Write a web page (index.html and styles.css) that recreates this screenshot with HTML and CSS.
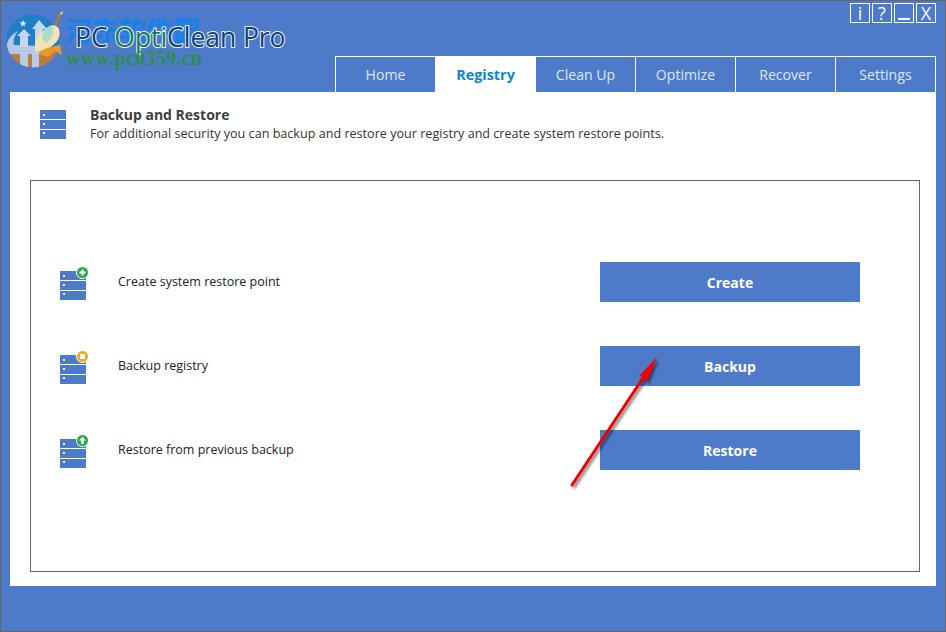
FILE: index.html
```html
<!DOCTYPE html>
<html>
    <head>
        <meta charset="utf-8">
        <title>PC OptiClean Pro</title>
        <link rel="stylesheet" href="styles.css">
    </head>
    <body>
        <div class="window">

            <!--Header with logo, window buttons and tabs-->
            <div class="header">
                <svg class="logo_icon" width="70" height="70" viewBox="0 0 70 70">
                    <defs>
                        <clipPath id="logo_circle"><circle cx="33" cy="36" r="26.5"/></clipPath>
                    </defs>
                    <g clip-path="url(#logo_circle)">
                        <rect x="0" y="0" width="70" height="70" fill="#1f80c8"/>
                        <rect x="0" y="44" width="70" height="26" fill="#b97c42"/>
                        <path d="M6 46 Q6 32 18 26 Q12 34 14 40 L42 41 L44 49 L6 49 Z" fill="#b4c8e6"/>
                        <rect x="20" y="47" width="8" height="16" fill="#b8cbe8"/>
                        <rect x="32" y="47" width="7" height="16" fill="#b8cbe8"/>
                        <path d="M24 24 L31 31 L28 31 L28 42 L20 42 L20 31 L17 31 Z" fill="#c6d6ee"/>
                        <path d="M39 15 L47 24 L43 24 L43 42 L35 42 L35 24 L32 24 Z" fill="#c6d6ee"/>
                    </g>
                    <path d="M23 15 l1 2.2 2.4 .3 -1.8 1.6 .5 2.4 -2.1 -1.2 -2.1 1.2 .5 -2.4 -1.8 -1.6 2.4 -.3 Z" fill="#e0eaf6"/>
                    <path d="M55 21 L61 7" stroke="#a5852f" stroke-width="2.5" fill="none"/>
                    <path d="M60 8 l3 -2 -1 4 Z" fill="#e8d9a0"/>
                    <path d="M35 46 Q33 34 44 25 Q54 16 59 24 Q62 34 52 41 Q42 50 35 46 Z" fill="#f4e3b4"/>
                    <path d="M42 34 Q42 24 52 20 Q56 30 46 38 Z" fill="#a9dccb"/>
                    <path d="M38 47 L47 43 L60 40 L62 50 L55 46 L48 52 L42 50 Z" fill="#e69a2e"/>
                </svg>
                <div class="watermark_cn">河东软件园</div>
                <div class="logo_text">PC <span class="logo_tint">Opti</span>Clean Pro</div>
                <div class="watermark_url">www.pc0359.cn</div>

                <div class="window_buttons">
                    <div class="window_button">i</div>
                    <div class="window_button">?</div>
                    <div class="window_button window_button_min"></div>
                    <div class="window_button">X</div>
                </div>

                <div class="tabs">
                    <div class="tab">Home</div>
                    <div class="tab tab_active">Registry</div>
                    <div class="tab">Clean Up</div>
                    <div class="tab">Optimize</div>
                    <div class="tab">Recover</div>
                    <div class="tab tab_last">Settings</div>
                </div>
            </div>

            <!--Page content-->
            <div class="content">
                <div class="page_title">
                    <svg class="server_icon" width="26" height="29" viewBox="0 0 26 29">
                        <use href="#server"/>
                    </svg>
                    <div>
                        <div class="page_heading">Backup and Restore</div>
                        <div class="page_description">For additional security you can backup and restore your registry and create system restore points.</div>
                    </div>
                </div>

                <div class="panel">
                    <div class="action_row">
                        <svg class="action_icon" width="30" height="34" viewBox="0 0 30 34">
                            <use href="#server" y="5"/>
                            <circle cx="22.5" cy="6.5" r="6.5" fill="#fff"/>
                            <circle cx="22.5" cy="6.5" r="5.5" fill="#22a94a"/>
                            <path d="M22.5 3.5v6M19.5 6.5h6" stroke="#fff" stroke-width="2"/>
                        </svg>
                        <div class="action_label">Create system restore point</div>
                        <div class="action_button">Create</div>
                    </div>
                    <div class="action_row">
                        <svg class="action_icon" width="30" height="34" viewBox="0 0 30 34">
                            <use href="#server" y="5"/>
                            <circle cx="22.5" cy="6.5" r="6.5" fill="#fff"/>
                            <circle cx="22.5" cy="6.5" r="5.5" fill="#f2a81d"/>
                            <rect x="20" y="4" width="5" height="5" fill="#fff"/>
                        </svg>
                        <div class="action_label">Backup registry</div>
                        <div class="action_button">Backup</div>
                    </div>
                    <div class="action_row">
                        <svg class="action_icon" width="30" height="34" viewBox="0 0 30 34">
                            <use href="#server" y="5"/>
                            <circle cx="22.5" cy="6.5" r="6.5" fill="#fff"/>
                            <circle cx="22.5" cy="6.5" r="5.5" fill="#22a94a"/>
                            <path d="M22.5 2.8l3.4 3.6h-2.1v3.6h-2.6v-3.6h-2.1z" fill="#fff"/>
                        </svg>
                        <div class="action_label">Restore from previous backup</div>
                        <div class="action_button">Restore</div>
                    </div>
                </div>
            </div>
        </div>

        <!--Red arrow drawn over the page-->
        <svg class="arrow" width="110" height="150" viewBox="0 0 110 150">
            <defs>
                <filter id="arrow_shadow" x="-20%" y="-20%" width="150%" height="150%">
                    <feDropShadow dx="2" dy="2" stdDeviation="1.5" flood-color="#000" flood-opacity="0.55"/>
                </filter>
            </defs>
            <g filter="url(#arrow_shadow)" fill="#f00000">
                <path d="M12 138 L83 31" stroke="#f00000" stroke-width="3" stroke-linecap="round" fill="none"/>
                <path d="M97 10 L79 29 L83 30 L87 35 Z"/>
            </g>
        </svg>

        <!--Shared server glyph-->
        <svg width="0" height="0" class="defs_only">
            <defs>
                <g id="server">
                    <rect x="0" y="0" width="26" height="9" fill="#4e7bc9"/>
                    <rect x="0" y="10" width="26" height="9" fill="#4e7bc9"/>
                    <rect x="0" y="20" width="26" height="9" fill="#4e7bc9"/>
                    <rect x="3" y="4" width="2" height="2" fill="#fff"/>
                    <rect x="3" y="13" width="2" height="2" fill="#fff"/>
                    <rect x="3" y="22" width="2" height="2" fill="#fff"/>
                </g>
            </defs>
        </svg>
    </body>
</html>
```
FILE: styles.css
```css
html,body{
    border:0;
    margin:0;
    padding:0;
    width: 946px;
    height: 632px;
    overflow: hidden;
}

body{
    position: relative;
    font-family: "Open Sans", "Noto Sans", sans-serif;
}

.window{
    box-sizing: border-box;
    width: 946px;
    height: 632px;
    border: 1px solid #666;
    background: #4e7bc9;
    padding: 0 9px 45px 9px;
    display: flex;
    flex-direction: column;
}

.header{
    position: relative;
    height: 91px;
    display: flex;
    flex-direction: column;
    align-items: flex-end;
    justify-content: space-between;
}

.logo_icon{
    position: absolute;
    left: -10px;
    top: 4px;
}

.watermark_cn{
    position: absolute;
    left: 55px;
    top: 11px;
    font-family: "Noto Sans CJK SC", sans-serif;
    font-weight: 900;
    font-size: 27px;
    line-height: 36px;
    color: #1a80e6;
    white-space: nowrap;
}

.logo_text{
    position: absolute;
    left: 65px;
    top: 18px;
    font-family: "Open Sans", sans-serif;
    font-size: 26.4px;
    line-height: 36px;
    color: #123f78;
    -webkit-text-stroke: 2px #e8f0fa;
    paint-order: stroke fill;
    white-space: nowrap;
}

.logo_tint{
    color: #1a7a50;
}

.watermark_url{
    position: absolute;
    left: 56px;
    top: 45px;
    font-family: "Liberation Serif", serif;
    font-weight: 700;
    font-size: 20px;
    letter-spacing: 0.3px;
    line-height: 24px;
    color: #2b8f4c;
    white-space: nowrap;
}

.window_buttons{
    display: flex;
    gap: 2px;
    padding-top: 2px;
}

.window_button{
    box-sizing: border-box;
    width: 20px;
    height: 20px;
    border: 1px solid #fff;
    color: #fff;
    font-size: 18px;
    line-height: 18px;
    text-align: center;
}

.window_button_min{
    position: relative;
}

.window_button_min::after{
    content: "";
    position: absolute;
    left: 3px;
    right: 3px;
    bottom: 2px;
    height: 2px;
    background: #fff;
}

.tabs{
    display: flex;
}

.tab{
    box-sizing: border-box;
    width: 100px;
    height: 36px;
    border: 1px solid #fff;
    border-bottom: 0;
    border-right: 0;
    color: #dfe8f6;
    font-size: 14.1px;
    line-height: 35px;
    text-align: center;
}

.tab_active{
    background: #fff;
    color: #0f86cc;
    font-size: 14.4px;
    font-weight: 700;
}

.tab_last{
    width: 101px;
    border-right: 1px solid #fff;
}

.content{
    flex: 1;
    background: #fff;
    display: flex;
    flex-direction: column;
    padding: 0 16px 14px 20px;
}

.page_title{
    height: 88px;
    display: flex;
    align-items: flex-start;
    gap: 24px;
    padding: 14px 0 0 10px;
    box-sizing: border-box;
    color: #333;
}

.server_icon{
    margin-top: 4px;
}

.page_heading{
    font-size: 14px;
    font-weight: 700;
    line-height: 18px;
    color: #404040;
}

.page_description{
    font-size: 12.6px;
    line-height: 19px;
    color: #333;
}

.panel{
    flex: 1;
    box-sizing: border-box;
    border: 1px solid #666;
    padding: 81px 59px 0 29px;
    display: flex;
    flex-direction: column;
    gap: 44px;
}

.action_row{
    height: 40px;
    display: flex;
    align-items: center;
}

.action_icon{
    width: 30px;
    margin-top: 2px;
    margin-right: 28px;
}

.action_label{
    flex: 1;
    font-size: 12.5px;
    line-height: 18px;
    color: #222;
}

.action_button{
    width: 260px;
    height: 40px;
    background: #4e7bc9;
    color: #fff;
    font-size: 14px;
    font-weight: 700;
    line-height: 41px;
    text-align: center;
}

.arrow{
    position: absolute;
    left: 560px;
    top: 347px;
    pointer-events: none;
}

.defs_only{
    position: absolute;
}
```
